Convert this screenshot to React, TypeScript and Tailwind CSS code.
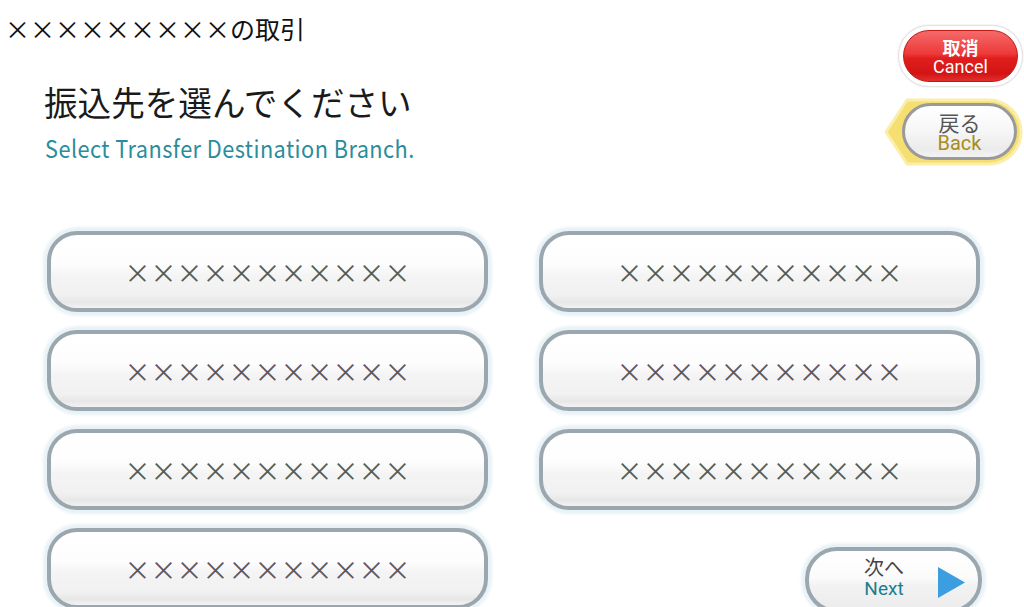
import React from "react";

const JP = { fontFamily: '"Noto Sans CJK JP", "Noto Sans", sans-serif' };
const LAT = { fontFamily: 'Roboto, "Noto Sans", sans-serif' };

function Branch() {
  return (
    <div className="h-[81px] rounded-[30px] border-4 border-[#9ba7ae] bg-[linear-gradient(to_bottom,#ffffff_0%,#fdfdfd_40%,#f4f4f4_56%,#f1f1f1_82%,#e7e7e7_92%,#f3f3f3_100%)] shadow-[0_0_3px_4px_#e9f2f6] flex items-center justify-center">
      <span className="text-[26px] leading-none text-[#5a5a5a]">×××××××××××</span>
    </div>
  );
}

export default function App() {
  return (
    <div className="w-[1024px] h-[607px] bg-white overflow-hidden" style={JP}>
      <div className="flex justify-between h-[231px]">
        <div className="flex flex-col">
          <div className="ml-[5px] mt-[13px] text-[25px] leading-[30px] text-[#111]">×××××××××の取引</div>
          <div className="ml-[44px] mt-[39px] text-[33.6px] leading-[40px] text-[#1a1a1a]">振込先を選んでください</div>
          <div className="ml-[45px] mt-[12px] text-[24px] leading-[28px] text-[#2a8c9c] tracking-[0.5px] origin-left scale-x-[0.905] whitespace-nowrap">
            Select Transfer Destination Branch.
          </div>
        </div>
        <div className="flex flex-col items-end pt-[25px]">
          <div className="mr-[1px] rounded-full bg-white border border-[#e4e4e4] p-[4px] shadow-[0_0_2px_#ddd]">
            <div className="w-[115px] h-[52px] rounded-full border border-[#c41818] bg-[linear-gradient(to_bottom,#f46a6a_0%,#ee3a3a_45%,#e01e1e_55%,#d41414_85%,#e03030_100%)] flex flex-col items-center justify-center text-white">
              <span className="text-[18px] leading-[20px] font-bold">取消</span>
              <span className="text-[18px] leading-[19px]" style={LAT}>Cancel</span>
            </div>
          </div>
          <div className="relative mt-[10px] w-[140px] h-[70px]">
            <svg className="absolute inset-0" width="140" height="70" viewBox="0 0 140 70">
              <path d="M2 35 L23 3 H105 A32 32 0 0 1 105 67 H23 Z" fill="#f4df70" stroke="#faeeaa" strokeWidth="3" strokeLinejoin="round" />
            </svg>
            <div className="absolute left-[18px] top-[6px] w-[115px] h-[57px] rounded-full border-[3px] border-[#9a9a9a] bg-[linear-gradient(to_bottom,#ffffff_0%,#f6f6f6_50%,#ebebeb_85%,#f4f4f4_100%)] flex flex-col items-center justify-center">
              <span className="text-[21px] leading-[22px] text-[#555]">戻る</span>
              <span className="text-[20px] leading-[20px] text-[#a88c1c]" style={LAT}>Back</span>
            </div>
          </div>
        </div>
      </div>
      <div className="ml-[47px] grid grid-cols-[441px_441px] gap-x-[51px] gap-y-[18px]">
        <Branch />
        <Branch />
        <Branch />
        <Branch />
        <Branch />
        <Branch />
        <Branch />
        <div className="flex justify-end pt-[19px]">
          <div className="mr-[-2px] w-[177px] h-[66px] rounded-[32px] border-4 border-[#9ba7ae] bg-[linear-gradient(to_bottom,#ffffff_0%,#fbfbfb_45%,#f2f2f2_60%,#ececec_100%)] shadow-[0_0_3px_4px_#e9f2f6] flex items-start pt-[5px]">
            <div className="ml-[52px] w-[46px] flex flex-col items-center">
              <span className="text-[20px] leading-[22px] text-[#444]">次へ</span>
              <span className="text-[19px] leading-[22px] text-[#1b7d8d]" style={LAT}>Next</span>
            </div>
            <svg className="ml-[31px] mt-[11px]" width="27" height="31" viewBox="0 0 27 31">
              <path d="M0 0 L27 15.5 L0 31 Z" fill="#3a9ee0" />
            </svg>
          </div>
        </div>
      </div>
    </div>
  );
}
